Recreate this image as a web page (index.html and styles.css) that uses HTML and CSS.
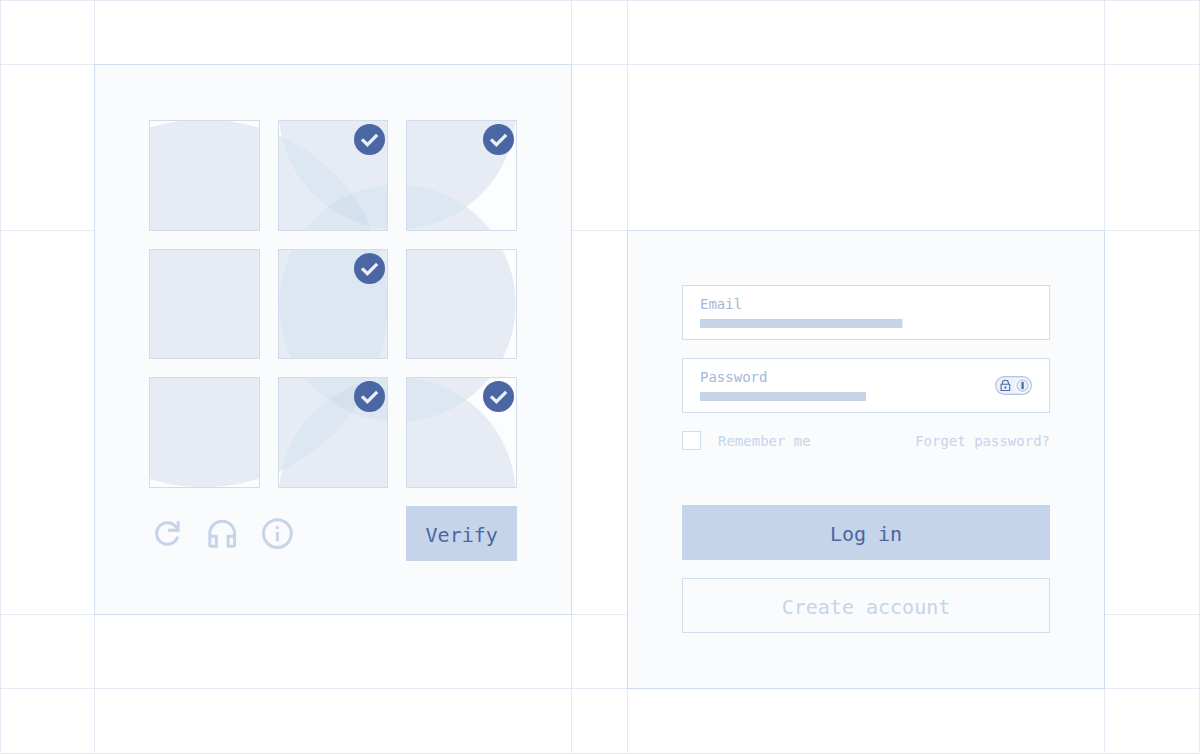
FILE: index.html
```html
<!DOCTYPE html>
<html lang="en">
<head>
  <meta charset="UTF-8" />
  <meta name="viewport" content="width=device-width, initial-scale=1.0"/>
  <title>Log in</title>
  <link rel="stylesheet" href="styles.css">
</head>
<body>
  <!-- Shared shapes: circle pattern and tick badge -->
  <svg class="defs" aria-hidden="true">
    <defs>
      <clipPath id="clip-big"><circle cx="204" cy="303.5" r="184"/></clipPath>
      <clipPath id="clip-mid"><circle cx="397.5" cy="303.5" r="118.5"/></clipPath>
      <g id="pattern">
        <g class="shade-1">
          <circle cx="204" cy="303.5" r="184"/>
          <circle cx="397.5" cy="111" r="118.5"/>
          <circle cx="397.5" cy="303.5" r="118.5"/>
          <circle cx="397.5" cy="496" r="118.5"/>
        </g>
        <g class="shade-2" clip-path="url(#clip-big)">
          <circle cx="397.5" cy="111" r="118.5"/>
          <circle cx="397.5" cy="303.5" r="118.5"/>
          <circle cx="397.5" cy="496" r="118.5"/>
        </g>
        <g class="shade-2" clip-path="url(#clip-mid)">
          <circle cx="397.5" cy="111" r="118.5"/>
          <circle cx="397.5" cy="496" r="118.5"/>
        </g>
        <g class="shade-3" clip-path="url(#clip-big)">
          <g clip-path="url(#clip-mid)">
            <circle cx="397.5" cy="111" r="118.5"/>
            <circle cx="397.5" cy="496" r="118.5"/>
          </g>
        </g>
      </g>
      <symbol id="tick" viewBox="0 0 31 31">
        <circle cx="15.5" cy="15.5" r="15.5" fill="#4a66a3"/>
        <path d="M8 15.3l5.4 5.4 9.8-9.8" fill="none" stroke="#e9eef7" stroke-width="3.3"/>
      </symbol>
    </defs>
  </svg>

  <div class="page">
    <!-- Guide lines -->
    <div class="guide guide-col-left"></div>
    <div class="guide guide-col-right"></div>
    <div class="guide guide-row-left"></div>
    <div class="guide guide-row-right"></div>

    <!-- Picture captcha -->
    <form class="card captcha">
      <div class="tiles">
        <label class="tile">
          <svg class="art" viewBox="150 121 109 109"><use href="#pattern"/></svg>
          <input type="checkbox" aria-label="Tile 1">
          <svg class="badge"><use href="#tick"/></svg>
        </label>
        <label class="tile">
          <svg class="art" viewBox="279 121 109 109"><use href="#pattern"/></svg>
          <input type="checkbox" aria-label="Tile 2" checked>
          <svg class="badge"><use href="#tick"/></svg>
        </label>
        <label class="tile">
          <svg class="art" viewBox="407 121 109 109"><use href="#pattern"/></svg>
          <input type="checkbox" aria-label="Tile 3" checked>
          <svg class="badge"><use href="#tick"/></svg>
        </label>
        <label class="tile">
          <svg class="art" viewBox="150 249 109 109"><use href="#pattern"/></svg>
          <input type="checkbox" aria-label="Tile 4">
          <svg class="badge"><use href="#tick"/></svg>
        </label>
        <label class="tile">
          <svg class="art" viewBox="279 249 109 109"><use href="#pattern"/></svg>
          <input type="checkbox" aria-label="Tile 5" checked>
          <svg class="badge"><use href="#tick"/></svg>
        </label>
        <label class="tile">
          <svg class="art" viewBox="407 249 109 109"><use href="#pattern"/></svg>
          <input type="checkbox" aria-label="Tile 6">
          <svg class="badge"><use href="#tick"/></svg>
        </label>
        <label class="tile">
          <svg class="art" viewBox="150 378 109 109"><use href="#pattern"/></svg>
          <input type="checkbox" aria-label="Tile 7">
          <svg class="badge"><use href="#tick"/></svg>
        </label>
        <label class="tile">
          <svg class="art" viewBox="279 378 109 109"><use href="#pattern"/></svg>
          <input type="checkbox" aria-label="Tile 8" checked>
          <svg class="badge"><use href="#tick"/></svg>
        </label>
        <label class="tile">
          <svg class="art" viewBox="407 378 109 109"><use href="#pattern"/></svg>
          <input type="checkbox" aria-label="Tile 9" checked>
          <svg class="badge"><use href="#tick"/></svg>
        </label>

        <div class="tools">
          <button type="button" class="tool" aria-label="Reload">
            <svg viewBox="0 0 37 37">
              <path d="M28.7 21.8A10.8 10.8 0 1 1 26.6 11.4L29 14.6M29.2 6.2v9H19"/>
            </svg>
          </button>
          <button type="button" class="tool" aria-label="Audio">
            <svg viewBox="0 0 37 37">
              <path d="M5.8 20v-1.3a12.4 12.4 0 0 1 24.8 0V20M5.8 19.5v10.2q0 1.5 1.5 1.5h5V21.3H5.8M30.6 19.5v10.2q0 1.5-1.5 1.5h-5V21.3h6.5"/>
            </svg>
          </button>
          <button type="button" class="tool" aria-label="Information">
            <svg viewBox="0 0 37 37">
              <circle cx="18.4" cy="18.6" r="13.9"/>
              <path d="M18.4 17v9.2"/>
              <circle class="dot" cx="18.4" cy="12.6" r="1.7"/>
            </svg>
          </button>
        </div>
        <button type="button" class="btn btn-fill">Verify</button>
      </div>
    </form>

    <!-- Login form -->
    <form class="card login">
      <div class="field">
        <div class="field-text">
          <label for="email">Email</label>
          <input type="email" id="email" class="bar-email">
        </div>
      </div>
      <div class="field">
        <div class="field-text">
          <label for="password">Password</label>
          <input type="password" id="password" class="bar-password">
        </div>
        <button type="button" class="manager" aria-label="Fill password">
          <svg viewBox="0 0 37 19">
            <rect x=".6" y=".6" width="35.8" height="17.8" rx="8.9" fill="#edf1f9" stroke="#b3c4e0" stroke-width="1.2"/>
            <circle cx="27.6" cy="9.5" r="7.6" fill="#fff"/>
            <circle cx="27.6" cy="9.5" r="5.6" fill="#e8eef7" stroke="#c3d1e8" stroke-width="1.6"/>
            <path d="M27.6 5.9v7.2" stroke="#4a66a3" stroke-width="2.2"/>
            <path d="M6.1 8.3h8.6v6.2H6.1zM7.4 8V7a3 2.8 0 0 1 6 0v1" fill="none" stroke="#4a66a3" stroke-width="1.1"/>
            <path d="M10.4 10.3v2.4" stroke="#4a66a3" stroke-width="1.6"/>
          </svg>
        </button>
      </div>
      <div class="options">
        <label class="remember"><input type="checkbox"> Remember me</label>
        <a href="#">Forget password?</a>
      </div>
      <div class="actions">
        <button type="submit" class="btn btn-fill">Log in</button>
        <button type="button" class="btn btn-line">Create account</button>
      </div>
    </form>
  </div>
</body>
</html>
```

FILE: styles.css
```css
:root {
  --guide: #e6eaf5;
  --line: #d0ddec;
  --soft: #c6d4ea;
  --mid: #a3b8da;
  --strong: #4a66a3;
  --card: #fafbfd;
}

* {
  box-sizing: border-box;
}

body {
  margin: 0;
  background: #fff;
  font-family: "DejaVu Sans Mono", "Liberation Mono", monospace;
  font-size: 14px;
  line-height: 18px;
}

.defs {
  position: absolute;
  width: 0;
  height: 0;
}

/* page grid */
.page {
  display: grid;
  grid-template-columns: 93fr 478fr 55fr 478fr 94fr;
  grid-template-rows: 63px 166px auto 74px 1fr;
  min-height: 100vh;
  border: 1px solid var(--guide);
}

.guide {
  border: 0 solid var(--guide);
}

.guide-col-left {
  grid-area: 1 / 2 / -1 / 3;
  border-width: 0 1px;
}

.guide-col-right {
  grid-area: 1 / 4 / -1 / 5;
  border-width: 0 1px;
}

.guide-row-left {
  grid-area: 2 / 1 / 4 / -1;
  border-width: 1px 0;
}

.guide-row-right {
  grid-area: 3 / 1 / 5 / -1;
  border-width: 1px 0;
}

.card {
  background: var(--card);
  border: 1px solid var(--line);
  padding: 54px;
  z-index: 1;
}

.captcha {
  grid-area: 2 / 2 / 4 / 3;
  padding: 55px 54px 53px;
}

.login {
  grid-area: 3 / 4 / 5 / 5;
  display: flex;
  flex-direction: column;
  gap: 18px;
}

/* captcha */
.tiles {
  display: grid;
  grid-template-columns: repeat(3, 1fr);
  gap: 18px;
}

.tile {
  position: relative;
  aspect-ratio: 1;
  border: 1px solid var(--line);
  background: #fcfdfe;
  cursor: pointer;
}

.tile input {
  position: absolute;
  inset: 0;
  margin: 0;
  appearance: none;
  cursor: pointer;
}

.art {
  display: block;
  width: 100%;
  height: 100%;
}

.badge {
  display: none;
  position: absolute;
  top: 3px;
  right: 2px;
  width: 31px;
  height: 31px;
  pointer-events: none;
}

.tile input:checked + .badge {
  display: block;
}

.shade-1 { fill: #e7ebf3; }
.shade-2 { fill: #dde7f1; }
.shade-3 { fill: #d5e0ee; }

.tools {
  grid-column: span 2;
  display: flex;
  align-items: center;
  gap: 18px;
}

.tool,
.manager {
  padding: 0;
  border: none;
  background: none;
  cursor: pointer;
}

.tool svg {
  display: block;
  width: 37px;
  height: 37px;
  fill: none;
  stroke: var(--soft);
  stroke-width: 3;
}

.tool .dot {
  fill: var(--soft);
  stroke: none;
}

/* buttons */
.btn {
  height: 55px;
  padding: 2px 0 0;
  border: 1px solid var(--soft);
  font-family: inherit;
  font-size: 20px;
  cursor: pointer;
}

.btn-fill {
  background: var(--soft);
  color: var(--strong);
}

.btn-line {
  background: none;
  border-color: var(--line);
  color: var(--soft);
}

/* login */
.field {
  display: flex;
  align-items: center;
  justify-content: space-between;
  gap: 18px;
  height: 55px;
  padding: 0 17px;
  border: 1px solid var(--line);
  background: #fff;
}

.field-text {
  flex: 1;
  display: flex;
  flex-direction: column;
  gap: 6px;
  padding-bottom: 2px;
  color: var(--mid);
}

.field input {
  width: 100%;
  height: 9px;
  padding: 0;
  border: none;
  outline: none;
  background: linear-gradient(var(--soft), var(--soft)) no-repeat;
}

.field .bar-email {
  background-size: 61% 100%;
}

.field .bar-password {
  background-size: 60% 100%;
}

.manager svg {
  display: block;
  width: 37px;
  height: 19px;
}

.options {
  display: flex;
  align-items: center;
  justify-content: space-between;
  color: var(--soft);
}

.options a {
  color: inherit;
  text-decoration: none;
}

.remember {
  display: flex;
  align-items: center;
  gap: 17px;
}

.remember input {
  width: 19px;
  height: 19px;
  margin: 0;
  border: 1px solid var(--line);
  background: #fff;
  appearance: none;
}

.actions {
  display: flex;
  flex-direction: column;
  gap: 18px;
  margin-top: 37px;
}
```
